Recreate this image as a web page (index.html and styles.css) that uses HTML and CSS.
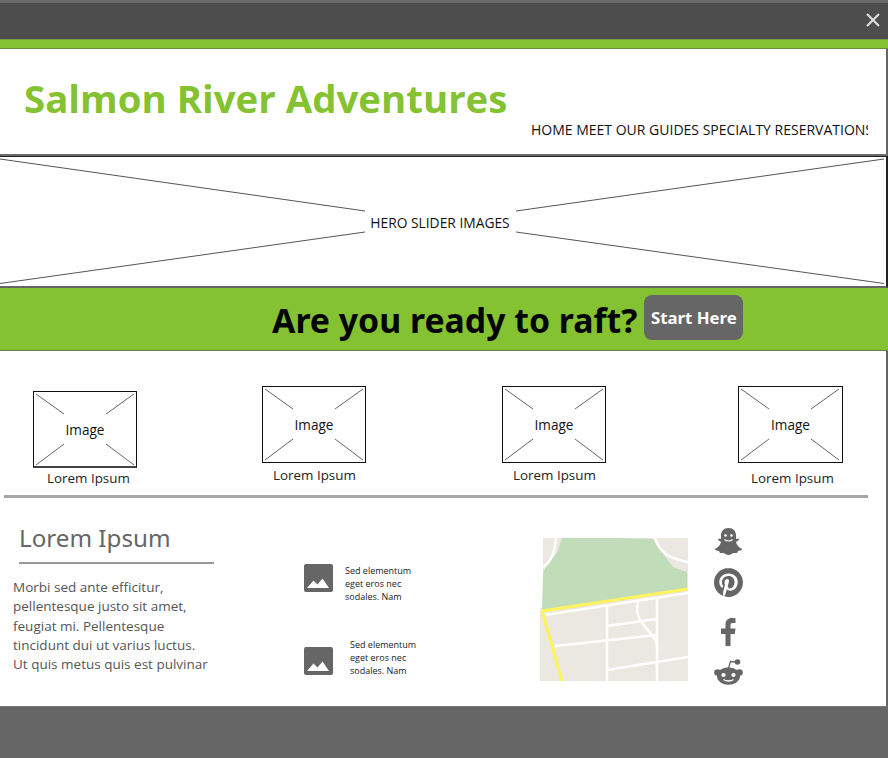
FILE: index.html
```html
<!DOCTYPE html>
<html lang="en">
<head>
<meta charset="utf-8">
<title>Salmon River Adventures</title>
<link rel="stylesheet" href="styles.css">
</head>
<body>
<div class="topbar">
  <svg class="close" viewBox="0 0 14 14" aria-label="Close"><path d="M1 1 13 13M13 1 1 13"/></svg>
</div>
<div class="strip"></div>
<header class="header">
  <h1 class="title">Salmon River Adventures</h1>
  <nav class="nav">HOME MEET OUR GUIDES SPECIALTY RESERVATIONS</nav>
</header>
<section class="hero">
  <svg class="hero-lines" viewBox="0 0 886 130">
    <path d="M0 2 365 54M0 126.500 365 75M884 2 516 54M884 126.500 516 75"/>
  </svg>
  <span class="hero-label">HERO SLIDER IMAGES</span>
</section>
<section class="cta">
  <h2 class="cta-text">Are you ready to raft?</h2>
  <a class="cta-btn">Start Here</a>
</section>
<main class="content">
  <section class="cards">
    <article class="card card-a">
      <div class="wire">
        <svg class="wire-lines" viewBox="0 0 104 76"><path d="M3 3 31 23M101 3 73 23M31 53 3 74M73 53 101 74"/></svg>
        <span class="wire-label">Image</span>
      </div>
      <p class="card-label">Lorem Ipsum</p>
    </article>
    <article class="card card-b">
      <div class="wire">
        <svg class="wire-lines" viewBox="0 0 104 76"><path d="M3 3 31 23M101 3 73 23M31 53 3 74M73 53 101 74"/></svg>
        <span class="wire-label">Image</span>
      </div>
      <p class="card-label">Lorem Ipsum</p>
    </article>
    <article class="card card-c">
      <div class="wire">
        <svg class="wire-lines" viewBox="0 0 104 76"><path d="M3 3 31 23M101 3 73 23M31 53 3 74M73 53 101 74"/></svg>
        <span class="wire-label">Image</span>
      </div>
      <p class="card-label">Lorem Ipsum</p>
    </article>
    <article class="card card-d">
      <div class="wire">
        <svg class="wire-lines" viewBox="0 0 104 76"><path d="M3 3 31 23M101 3 73 23M31 53 3 74M73 53 101 74"/></svg>
        <span class="wire-label">Image</span>
      </div>
      <p class="card-label">Lorem Ipsum</p>
    </article>
  </section>
  <hr class="divider">
  <section class="info">
    <div class="about">
      <h3 class="about-title">Lorem Ipsum</h3>
      <p class="about-text">Morbi sed ante efficitur, pellentesque justo sit amet, feugiat mi. Pellentesque tincidunt dui ut varius luctus. Ut quis metus quis est pulvinar</p>
    </div>
    <div class="media-list">
      <div class="media media-a">
        <svg class="media-icon" viewBox="0 0 29 28"><rect width="29" height="28" rx="2" fill="#666"/><path d="M3 24 9.500 16.500 13.500 20.500 18.500 14.500 25 24Z" fill="#fff"/></svg>
        <p class="media-text">Sed elementum<br>eget eros nec<br>sodales. Nam</p>
      </div>
      <div class="media media-b">
        <svg class="media-icon" viewBox="0 0 29 28"><rect width="29" height="28" rx="2" fill="#666"/><path d="M3 24 9.500 16.500 13.500 20.500 18.500 14.500 25 24Z" fill="#fff"/></svg>
        <p class="media-text">Sed elementum<br>eget eros nec<br>sodales. Nam</p>
      </div>
    </div>
    <svg class="map" viewBox="0 0 148 143">
      <rect x="3" width="145" height="75" fill="#ebe8e2"/>
      <rect y="70" width="148" height="73" fill="#ebe8e2"/>
      <path d="M22 0 17 15 7 27 3 35 2 72 147 50 147 34 133 29 118 9 113 1 73 0Z" fill="#c1dcb8"/>
      <g fill="none" stroke="#fff" stroke-width="2.500">
        <path d="M16 0C15 16 9 26 3 29"/>
        <path d="M115 0C120 15 130 21 148 24"/>
        <path d="M5 77 148 55"/>
        <path d="M67 66V143M117 60V143M15 108 117 97M67 88 116 81M67 132 148 119"/>
        <path d="M98 64C94 80 105 88 112 97S117 110 117 116"/>
      </g>
      <path d="M2 73 148 51M2 73 22 143" fill="none" stroke="#fff35c" stroke-width="3.200"/>
    </svg>
    <div class="social">
      <svg class="soc soc-snap" viewBox="0 0 29 27"><path d="M14.500 0C9.500 0 7 3.500 7 7.500V11L4.500 10.500 4 12 7 14C6.500 17 3.500 20 .5 21L2.500 22.500 5 23 6 25 9.500 25C11 25.500 12.500 27 14.500 27S18 25.500 19.500 25L23 25 24 23 26.500 22.500 28.500 21C25.500 20 22.500 17 22 14L25 12 24.500 10.500 22 11V7.500C22 3.500 19.500 0 14.500 0Z" fill="#666"/><circle cx="11.500" cy="7.500" r="1.300" fill="#fff"/><circle cx="17.500" cy="7.500" r="1.300" fill="#fff"/><path d="M10.500 11.500C12.500 13.500 16.500 13.500 18.500 11.500" fill="none" stroke="#fff" stroke-width="1.200"/></svg>
      <svg class="soc soc-pin" viewBox="0 0 24 24"><path d="M12.017 0C5.396 0 .029 5.367.029 11.987c0 5.079 3.158 9.417 7.618 11.162-.105-.949-.199-2.403.041-3.439.219-.937 1.406-5.957 1.406-5.957s-.359-.72-.359-1.781c0-1.663.967-2.911 2.168-2.911 1.024 0 1.518.769 1.518 1.688 0 1.029-.653 2.567-.992 3.992-.285 1.193.6 2.165 1.775 2.165 2.128 0 3.768-2.245 3.768-5.487 0-2.861-2.063-4.869-5.008-4.869-3.41 0-5.409 2.562-5.409 5.199 0 1.033.394 2.143.889 2.741.099.12.112.225.085.345-.09.375-.293 1.199-.334 1.363-.053.225-.172.271-.401.165-1.495-.69-2.433-2.878-2.433-4.646 0-3.776 2.748-7.252 7.92-7.252 4.158 0 7.392 2.967 7.392 6.923 0 4.135-2.607 7.462-6.233 7.462-1.214 0-2.354-.629-2.758-1.379l-.749 2.848c-.269 1.045-1.004 2.352-1.498 3.146 1.123.345 2.306.535 3.55.535 6.607 0 11.985-5.365 11.985-11.987C23.97 5.39 18.592.026 11.985.026L12.017 0z" fill="#666"/></svg>
      <svg class="soc soc-fb" viewBox="0 0 15 28"><path d="M4.500 28V16H0V10.500H4.500V6.500C4.500 2.200 7 0 10.800 0 12.600 0 14 .1 14.500.2V5H11.700C9.700 5 9.500 6 9.500 7.300V10.500H14.500L13.800 16H9.500V28Z" fill="#666"/></svg>
      <svg class="soc soc-reddit" viewBox="0 0 29 26"><g fill="#666"><ellipse cx="14.500" cy="17" rx="11.500" ry="8.800"/><circle cx="3.500" cy="13.500" r="3.300"/><circle cx="25.500" cy="13.500" r="3.300"/><circle cx="23.500" cy="3" r="2.800"/></g><path d="M14.500 9 16.500 2.500 23 3" fill="none" stroke="#666" stroke-width="1.300"/><circle cx="9.500" cy="16" r="2.100" fill="#fff"/><circle cx="19.500" cy="16" r="2.100" fill="#fff"/><path d="M9.500 20.500C12 22.500 17 22.500 19.500 20.500" fill="none" stroke="#fff" stroke-width="1.300"/></svg>
    </div>
  </section>
</main>
<footer class="footer"></footer>
</body>
</html>
```
FILE: styles.css
```css
* { box-sizing: border-box; }
html, body { margin: 0; padding: 0; }
body {
  width: 888px;
  height: 758px;
  overflow: hidden;
  background: #fff;
  color: #111;
  font-family: "Open Sans", "Noto Sans", sans-serif;
}
.topbar {
  height: 39px;
  background: #4d4d4d;
  border-top: 3px solid #6a6a6a;
  display: flex;
  justify-content: flex-end;
  align-items: flex-start;
  padding: 10px 8px 0 0;
}
.close { width: 14px; height: 14px; }
.close path { stroke: #dcdcdc; stroke-width: 2.2; fill: none; }
.strip { height: 10px; background: #84c231; border-top: 1px solid #76a040; border-bottom: 1px solid #6a8a45; }
.header {
  height: 107px;
  display: flex;
  align-items: flex-start;
  justify-content: space-between;
  border-right: 2px solid #666;
  border-bottom: 2px solid #6a6a6a;
  padding: 0 18px 0 24px;
}
.title {
  margin: 23px 0 0;
  font-size: 38.400px;
  line-height: 52px;
  font-weight: 700;
  color: #84c231;
  white-space: nowrap;
}
.nav {
  width: 337px;
  margin-top: 71px;
  overflow: hidden;
  white-space: nowrap;
  font-size: 14px;
  line-height: 20px;
  color: #111;
}
.hero {
  height: 132px;
  position: relative;
  display: flex;
  justify-content: center;
  align-items: center;
  border-top: 1px solid #222;
  border-right: 2px solid #222;
  border-bottom: 2px solid #666;
  padding: 2px 6px 0 0;
}
.hero-lines { position: absolute; left: 0; top: 0; width: 886px; height: 130px; }
.hero-lines path { stroke: #555; stroke-width: 1; fill: none; }
.hero-label { font-size: 13.800px; line-height: 20px; position: relative; }
.cta {
  height: 63px;
  background: #84c231;
  border-bottom: 1px solid #667a50;
  display: flex;
  align-items: flex-start;
  padding: 7px 0 0 272px;
}
.cta-text {
  margin: 0;
  font-family: "Noto Sans", "Open Sans", sans-serif;
  font-size: 33.800px;
  line-height: 50px;
  font-weight: 700;
  color: #050505;
  white-space: nowrap;
}
.cta-btn {
  width: 99px;
  height: 45px;
  margin-left: 7px;
  background: #666;
  border-radius: 8px;
  color: #fff;
  font-family: "Noto Sans", "Open Sans", sans-serif;
  font-size: 16.800px;
  font-weight: 700;
  display: flex;
  align-items: center;
  justify-content: center;
}
.content { height: 356px; border-right: 2px solid #666; border-bottom: 1px solid #777; }
.cards { height: 144px; display: flex; align-items: flex-start; padding-left: 33px; }
.card { width: 104px; }
.card-a { margin-top: 40px; }
.card-b { margin-top: 35px; margin-left: 125px; }
.card-c { margin-top: 35px; margin-left: 136px; }
.card-d { margin-top: 35px; margin-left: 132px; width: 105px; }
.wire {
  height: 77px;
  position: relative;
  border: 1px solid #111;
  display: flex;
  align-items: center;
  justify-content: center;
}
.card-a .wire { height: 77px; border-bottom: 2px solid #444; }
.wire-lines { position: absolute; left: -1px; top: -1px; width: 104px; height: 76px; }
.wire-lines path { stroke: #666; stroke-width: 1; fill: none; }
.wire-label { font-size: 13.600px; line-height: 20px; }
.card-a .wire-label { position: relative; top: 1px; }
.card-label {
  margin: 2px 0 0 11px;
  font-size: 13.400px;
  line-height: 20px;
  white-space: nowrap;
  color: #222;
}
.card-a .card-label { margin: 0 0 0 14px; }
.card-d .card-label { margin: 5px 0 0 13px; }
.divider { margin: 0 0 0 4px; width: 864px; height: 3px; border: 0; background: #a6a6a6; }
.info { display: flex; align-items: flex-start; }
.about { width: 214px; margin-left: 14px; }
.about-title {
  margin: 23px 0 0 5px;
  height: 43px;
  width: 195px;
  border-bottom: 2px solid #999;
  font-family: "Noto Sans", "Open Sans", sans-serif;
  font-size: 24.200px;
  line-height: 34px;
  font-weight: 400;
  color: #666;
}
.about-text {
  margin: 14px 0 0 -1px;
  width: 200px;
  font-size: 13.500px;
  line-height: 19.300px;
  color: #555;
}
.media-list { width: 236px; margin-left: 76px; }
.media { display: flex; align-items: flex-start; }
.media-a { margin-top: 66px; }
.media-b { margin-top: 44px; }
.media-icon { width: 29px; height: 28px; flex: none; }
.media-text { margin: 0; font-size: 9px; line-height: 13px; color: #222; white-space: nowrap; }
.media-a .media-text { margin: 0 0 0 12px; }
.media-b .media-text { margin: -9px 0 0 17px; }
.map { width: 148px; height: 143px; margin-top: 40px; flex: none; }
.social { display: flex; flex-direction: column; align-items: center; width: 29px; margin: 30px 0 0 26px; }
.soc { display: block; flex: none; }
.soc-snap { width: 29px; height: 27px; }
.soc-pin { width: 29px; height: 29px; margin-top: 13px; }
.soc-fb { width: 15px; height: 28px; margin-top: 21px; }
.soc-reddit { width: 29px; height: 26px; margin-top: 13px; }
.footer { height: 51px; background: #666; }
```
